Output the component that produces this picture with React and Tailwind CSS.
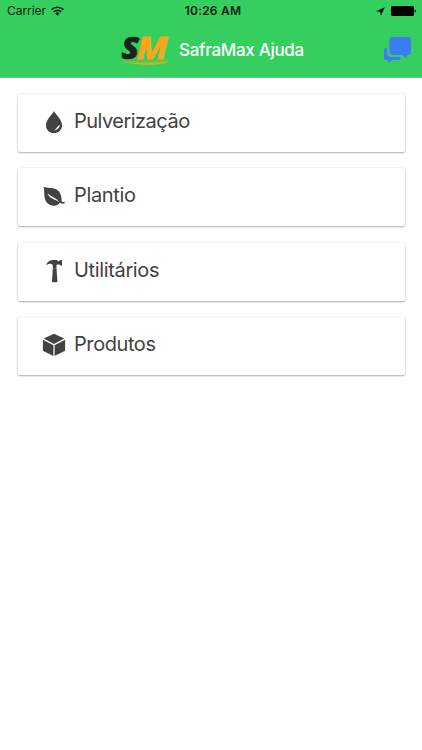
import React from 'react';

function WifiIcon() {
  return (
    <svg className="ml-[5px] h-[10px] w-[13px]" viewBox="0 0 13 10" fill="none" stroke="#06230f" strokeWidth="1.6">
      <path d="M0.6 3.6a8.4 8.4 0 0 1 11.8 0" />
      <path d="M2.7 5.9a5.4 5.4 0 0 1 7.6 0" />
      <path d="M4.3 7.4a3 3 0 0 1 4.4 0L6.5 9.8z" fill="#06230f" stroke="none" />
    </svg>
  );
}

function StatusBar() {
  return (
    <div className="grid h-[22px] grid-cols-3 items-center text-[#06230f]">
      <div className="flex items-center pl-[7px] text-[12px] leading-none">
        <span className="tracking-[-0.05px]">Carrier</span>
        <WifiIcon />
      </div>
      <div className="whitespace-nowrap pl-[4px] text-center text-[12px] leading-none font-semibold tracking-[0.2px]">10:26 AM</div>
      <div className="flex items-center justify-end pr-[6px]">
        <svg className="mr-[6px] h-[9px] w-[9px]" viewBox="0 0 9 9" fill="#000">
          <path d="M8.8 0.2L4.9 8.7L4.3 4.8L0.2 4.3z" />
        </svg>
        <svg className="h-[10px] w-[25px]" viewBox="0 0 25 10" fill="#000">
          <rect x="0" y="0" width="23" height="10" rx="1.4" />
          <path d="M23.6 3.2q1.3.4 1.3 1.8t-1.3 1.8z" />
        </svg>
      </div>
    </div>
  );
}

function Logo() {
  return (
    <svg className="h-[46px] w-[54px]" viewBox="0 0 54 46">
      <g fontFamily="'Open Sans', sans-serif" fontStyle="italic" fontSize="30">
        <text x="3.6" y="32.3" fontWeight="800" textLength="17.5" lengthAdjust="spacingAndGlyphs" fill="#1f1f1f" stroke="#1f1f1f" strokeWidth=".7">S</text>
        <text x="18.6" y="32.3" fontWeight="700" textLength="31" lengthAdjust="spacingAndGlyphs" fill="#f9a61c" stroke="#f9a61c" strokeWidth=".8">M</text>
      </g>
      <path d="M2 34.2Q26 37.4 51.8 34.2Q44 38.2 30 38Q14 37.4 2 34.2z" fill="#c9b229" />
      <path d="M4 34.2Q26 35.9 50 33.8" fill="none" stroke="#a5bb35" strokeWidth=".6" />
    </svg>
  );
}

function ChatIcon() {
  return (
    <svg className="h-[26px] w-[27px]" viewBox="0 0 27 26" fill="#3b7df5">
      <path d="M8.4 0H24Q27 0 27 3V15Q27 18 24 18H22.6V21.8L18.2 18H8.4Q5.4 18 5.4 15V3Q5.4 0 8.4 0z" />
      <path d="M3.2 10.4V16.2Q3.2 20 7 20H16.8V21.2Q16.8 23 14.6 23H8.1L4.4 25.9V23H2.7Q0 23 0 20.2V13.2Q0 10.7 3.2 10.4z" />
    </svg>
  );
}

function DropIcon() {
  return (
    <svg className="h-6 w-6" viewBox="0 0 24 24">
      <path d="M12 1C10.8 4.3 4 9.2 4 15.2C4 20 7.5 23.1 12 23.1S20 20 20 15.2C20 9.2 13.2 4.3 12 1z" fill="#424242" />
      <path d="M17.7 14.5Q17.9 19.6 11.4 20.6Q14.1 19 14.8 17.7Q15.5 16.3 17.7 14.5z" fill="#fff" />
    </svg>
  );
}

function LeafIcon() {
  return (
    <svg className="h-6 w-6" viewBox="0 0 24 24">
      <path d="M1.4 2.6C4.8 5 10 3 14.5 5.6C18.4 7.9 19.9 12.4 19.6 17.4C20.7 18.1 22 17.8 22.9 18.2L22.4 19.6C20.6 20 19.3 19.5 18 18.8C15 23 8.6 22.6 5 18.8C1 14.4 3.1 7.3 1.4 2.6z" fill="#424242" />
      <path d="M5.4 9Q8.2 12 12 13.6Q15.3 15.1 17.3 18.2Q14.4 15.8 11 15Q7.2 13.4 5.4 9z" fill="#fff" />
    </svg>
  );
}

function HammerIcon() {
  return (
    <svg className="h-6 w-6" viewBox="0 0 24 24" fill="#424242">
      <path d="M4 6.2C5.3 3.2 7.2 1.4 10.5 1.1H14.8Q15.5 2.3 17.1 2.1L18.6 1.1H20V6.4H18.6L17.1 5.4H15.5Q14.5 5.4 14.5 6.4V9.2H10.8V6.5Q10.5 4.8 8.6 4.8Q6.4 4.7 4 6.2z" />
      <path d="M10.8 9.2H14.5L15.4 22.4Q15.4 23.2 14.5 23.2H10.8Q9.9 23.2 10 22.4z" />
    </svg>
  );
}

function CubeIcon() {
  return (
    <svg className="h-6 w-6" viewBox="0 0 24 24" fill="#424242">
      <path d="M12 .8L22.3 5.5L12 11L1.7 5.5z" />
      <path d="M.9 6.7L11.4 12.2V23L.9 17.8z" />
      <path d="M23.1 6.7L12.6 12.2V23L23.1 17.8z" />
    </svg>
  );
}

const items = [
  { label: 'Pulverização', Icon: DropIcon, tracking: 'tracking-[-0.52px]' },
  { label: 'Plantio', Icon: LeafIcon, tracking: 'tracking-[-0.35px]' },
  { label: 'Utilitários', Icon: HammerIcon, tracking: 'tracking-[-0.35px]' },
  { label: 'Produtos', Icon: CubeIcon, tracking: 'tracking-[-0.42px]' },
];

export default function App() {
  return (
    <div className="flex h-[750px] w-[422px] flex-col overflow-hidden bg-white font-['Inter','Liberation_Sans',sans-serif]">
      <header className="h-[78px] border-b border-[#6fcf8a] bg-[#35cf60]">
        <StatusBar />
        <div className="flex h-[55px] items-center pr-[11px] pl-[118px]">
          <Logo />
          <h1 className="ml-[7px] text-[17px] leading-6 font-medium tracking-[-0.3px] whitespace-nowrap text-white">SafraMax Ajuda</h1>
          <button className="ml-auto" aria-label="Chat">
            <ChatIcon />
          </button>
        </div>
      </header>
      <main className="flex flex-col gap-[16.3px] pt-4 pr-[17px] pl-[18px]">
        {items.map(({ label, Icon, tracking }) => (
          <div key={label} className="flex h-[58px] items-center rounded-[2px] bg-white pl-6 shadow-[0_1px_2px_rgba(0,0,0,0.3),0_0_2px_rgba(0,0,0,0.12)]">
            <div className="mt-[-2px] flex items-center">
              <Icon />
              <span className={`mb-[2px] ml-[8px] text-[20px] leading-6 text-[#424242] ${tracking}`}>{label}</span>
            </div>
          </div>
        ))}
      </main>
    </div>
  );
}
